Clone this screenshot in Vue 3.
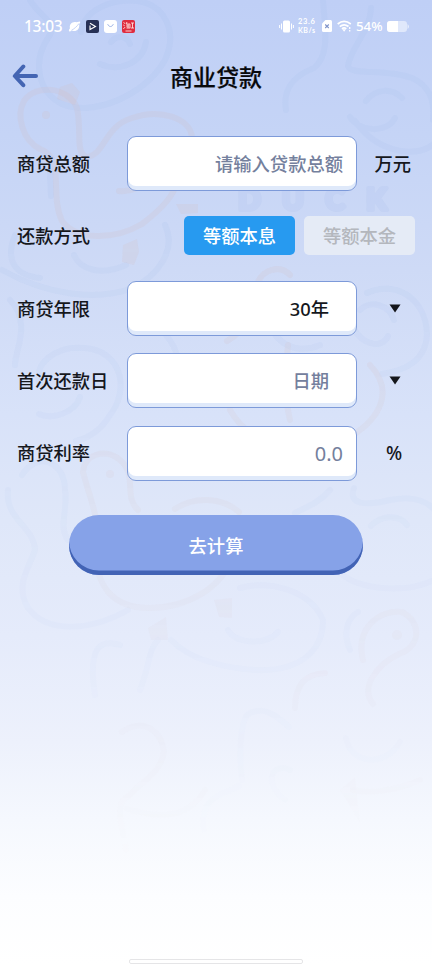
<script setup>
import { ref } from 'vue'

const amount = ref('')
const rate = ref('')
const method = ref('interest')
const methods = [
  { id: 'interest', label: '等额本息' },
  { id: 'principal', label: '等额本金' },
]
</script>

<template>
  <div class="page">
    <svg class="pattern" viewBox="0 0 432 964" fill="none" stroke-linecap="round" stroke-linejoin="round" aria-hidden="true">
      <g class="blue">
        <path d="M30 0C40 18 60 22 48 38C32 62 38 92 62 104C92 117 145 96 165 60C178 32 165 5 138 1C112-2 84 10 81 32M100 64C120 73 143 62 146 42M111 42C117 34 127 36 130 44" />
        <path d="M323 0C325 30 330 55 314 68C290 77 283 93 286 110M371 8C370 32 350 48 348 66C350 76 385 68 412 78C428 85 435 98 433 120M350 117C360 133 388 133 395 118M366 101C376 88 392 88 402 98M355 121C375 150 412 160 434 144" />
        <path d="M15 235C5 260 14 275 40 278M74 255C80 270 102 276 126 265M50 170L51 196M165 225C177 250 158 275 133 288C95 302 45 294 2 270" />
        <path d="M10 300C32 323 15 350 15 365M40 385C32 365 55 345 84 348C122 350 130 390 110 415C100 432 88 438 76 441M39 414C52 420 75 413 80 397M166 335C178 350 180 360 172 372" />
        <path d="M367 293C395 280 426 298 427 334C426 360 407 370 382 374M354 329C362 344 382 350 388 336M360 310C370 299 390 305 394 320M274 333C285 350 305 352 320 345" />
        <path d="M8 490C5 520 34 526 35 550C28 570 15 585 28 608C48 635 93 630 128 610M22 475C38 450 65 462 65 490C68 512 58 526 68 540" />
        <path d="M330 490C320 502 307 507 295 513M354 488C348 505 365 506 390 500C420 494 434 506 440 518M371 526C382 514 400 515 407 525M340 573C360 590 405 594 434 580" />
        <path d="M240 588C270 580 310 590 323 620C323 650 301 672 255 670C225 668 190 660 171 640M228 630C235 644 266 646 278 632M95 695C88 650 98 638 120 645M140 690C150 665 148 650 158 640M350 650C342 632 348 618 358 612" />
        <path d="M242 780C239 755 240 725 247 715C262 705 275 714 289 727M204 830C200 796 220 796 239 786M285 800C260 780 275 762 290 770M346 738C350 763 384 769 400 742" />
      </g>
      <g class="tan">
        <path d="M40 149C22 140 16 115 24 101C35 84 68 86 77 108C82 132 75 151 86 157C106 155 103 127 132 118C160 108 190 118 192 137M40 149C66 158 49 194 62 221C76 240 113 241 142 224C163 208 171 198 175 188M119 191C130 192 142 188 148 177" />
        <path d="M258 282C263 270 280 264 290 275M258 282C262 310 242 333 227 341M288 345C286 370 283 390 290 420M370 365C394 390 381 417 353 435M230 410C245 436 264 440 280 445" />
        <path d="M83 472C84 455 105 447 120 460C138 475 123 496 138 510M83 472C90 499 99 516 96 540C93 586 112 608 150 608C194 607 217 584 225 572M175 509C194 496 222 497 239 512" />
        <path d="M363 660C355 628 380 609 402 612C422 622 421 647 399 654C376 665 360 688 373 704M295 708C295 684 306 674 325 673" />
        <path d="M122 732C145 716 162 733 164 752C160 775 140 782 130 795C113 802 122 825 126 850M127 809C167 821 190 815 205 790M353 790C370 794 395 791 420 780" />
      </g>
      <g class="feet">
        <path d="M123 245L137 239L139 252L134 265L122 262ZM176 204L198 204L198 213L181 214ZM57 99L60 87L72 83L80 92L75 105Z" />
        <path d="M148 628L166 617L168 640L151 640ZM214 600L232 598L232 618L219 617ZM340 790L355 777L360 823Z" />
        <circle cx="46" cy="115" r="4" /><circle cx="110" cy="474" r="4" /><circle cx="397" cy="635" r="5" />
      </g>
      <text class="watermark" x="238" y="210">DUCK</text>
    </svg>

    <header class="status">
      <div class="status-left">
        <time>13:03</time>
        <svg class="planet" viewBox="0 0 14 14"><path d="M2.2 9C.8 4.5 5 1 9 2.3L12.8 1.6C13.6 2.4 13 3.6 12 4.6C13 9.5 9 13 5 11.7L1.4 12.4C.4 11.5 1.2 10.2 2.2 9Z" fill="#fff"/><path d="M3.6 11.2C6 10 10 6.8 11.8 3.8" stroke="#b9caf4" stroke-width=".9" fill="none"/></svg>
        <svg class="app" viewBox="0 0 13 13"><rect width="13" height="13" rx="2" fill="#273156"/><path d="M4 5.5V9.5L9.5 6.5L4 3.3" fill="none" stroke="#fff" stroke-width="1.1"/></svg>
        <svg class="app" viewBox="0 0 13 13"><rect width="13" height="13" rx="3" fill="#fff"/><path d="M3.7 4.2C5 7.3 8 7.3 9.3 4.2" fill="none" stroke="#9cb3e7"/></svg>
        <svg class="app" viewBox="0 0 13 13"><rect width="13" height="13" rx="2" fill="#df2c3f"/><path d="M1.5 2.5L3 3.5M1.3 5L2.7 5.8M1.3 9L3.2 7M5 2L4 4H8V8H4.5M4 6H7.5M6 4V8M9 3H12M10.5 3V8M8.8 8H12M3.5 11H9.5" fill="none" stroke="#ffe0dd" stroke-width=".9"/></svg>
      </div>
      <div class="status-right">
        <svg class="vibrate" viewBox="0 0 15 13"><rect x="4" y=".5" width="7" height="12" rx="1.5" fill="#fff"/><path d="M2.5 3.5V9.5M12.5 3.5V9.5M.6 5V8M14.4 5V8" stroke="#fff" stroke-width="1"/></svg>
        <div class="speed"><span>23.6</span><span>KB/s</span></div>
        <svg class="sim" viewBox="0 0 10 12"><path d="M3.5 0H8.5Q10 0 10 1.5V10.5Q10 12 8.5 12H1.5Q0 12 0 10.5V3.5Z" fill="#fff"/><path d="M3.2 4.5L6.8 8M6.8 4.5L3.2 8" stroke="#8095ca" stroke-width="1.1"/></svg>
        <svg class="wifi" viewBox="0 0 15 12"><path d="M.7 4Q7 -1.4 13.8 4M2.8 6.6Q7 3 11.5 6.5M5 8.8Q7 7 9.3 8.8" fill="none" stroke="#fff" stroke-width="1.7"/><path d="M5.3 9.3H8.9L7.1 11.8Z" fill="#fff"/><path d="M12.7 7V9M12.7 10V11.5" stroke="#fff" stroke-width="1.3"/></svg>
        <span class="percent">54%</span>
        <svg class="battery" viewBox="0 0 22 11"><rect width="20" height="11" rx="3" fill="#fff" opacity=".5"/><path d="M20.5 3Q22 4 22 5.5Q22 7 20.5 8Z" fill="#fff" opacity=".6"/><path d="M3 0H11V11H3Q0 11 0 8V3Q0 0 3 0Z" fill="#fff"/></svg>
      </div>
    </header>

    <nav class="titlebar">
      <button class="back" aria-label="返回">
        <svg viewBox="0 0 26 24"><path d="M11.3 2.5L2.8 12L11.3 21.2M3.3 12H24" fill="none" stroke="#4465b3" stroke-width="4" stroke-linecap="round" stroke-linejoin="round"/></svg>
      </button>
      <h1>商业贷款</h1>
    </nav>

    <main>
      <div class="row">
        <label class="label" for="amount">商贷总额</label>
        <input id="amount" v-model="amount" class="field" placeholder="请输入贷款总额">
        <span class="unit">万元</span>
      </div>
      <div class="row">
        <span class="label">还款方式</span>
        <div class="methods">
          <button v-for="m in methods" :key="m.id" :class="{ active: method === m.id }" @click="method = m.id">{{ m.label }}</button>
        </div>
      </div>
      <div class="row">
        <span class="label">商贷年限</span>
        <div class="field picker years">30年</div>
        <svg class="arrow" viewBox="0 0 12 9"><path d="M.5.5H11.5L6 8.5Z"/></svg>
      </div>
      <div class="row">
        <span class="label">首次还款日</span>
        <div class="field picker date">日期</div>
        <svg class="arrow" viewBox="0 0 12 9"><path d="M.5.5H11.5L6 8.5Z"/></svg>
      </div>
      <div class="row">
        <label class="label" for="rate">商贷利率</label>
        <input id="rate" v-model="rate" class="field numeric" placeholder="0.0">
        <span class="unit percent-unit">%</span>
      </div>
      <button class="submit">去计算</button>
    </main>
    <div class="home-bar"></div>
  </div>
</template>

<style>
body { margin: 0; }
</style>

<style scoped>
.page {
  position: relative;
  display: flex;
  flex-direction: column;
  box-sizing: border-box;
  height: 964px;
  overflow: hidden;
  background: linear-gradient(#bfcff6 0, #c5d4f6 14%, #cedaf6 28%, #d8e2f9 43%, #dfe7f9 54%, #e5ebfb 66%, #edf1fc 77%, #f5f8fe 85%, #fcfdff 93%, #fff);
  font-family: "Noto Sans CJK SC", sans-serif;
  color: #15171c;
}
button, input { font: inherit; border: 0; padding: 0; margin: 0; }
.pattern {
  position: absolute;
  inset: 0;
  width: 432px;
  height: 964px;
  pointer-events: none;
  mask-image: linear-gradient(#000 0, #000 25%, rgba(0, 0, 0, .6) 50%, rgba(0, 0, 0, .3) 70%, rgba(0, 0, 0, .1) 84%, transparent 92%);
}
.blue { stroke: #8eb0e8; stroke-width: 6; opacity: .09; }
.tan { stroke: #d6b5b1; stroke-width: 6; opacity: .15; }
.feet { fill: #d8b7b1; opacity: .16; }
.watermark { fill: #8fa9df; stroke: #8fa9df; stroke-width: 4px; opacity: .1; font: 900 30px/1 Lato, sans-serif; letter-spacing: 21px; }
.status, .titlebar, main { position: relative; }
.status {
  display: flex;
  justify-content: space-between;
  align-items: center;
  height: 52px;
  padding: 0 24px;
  box-sizing: border-box;
  color: #fff;
}
.status-left, .status-right { display: flex; align-items: center; }
.status-left { gap: 5px; }
time { font: 500 15.5px/20px "Noto Sans", sans-serif; width: 39px; letter-spacing: -.25px; white-space: nowrap; }
.planet { width: 13px; height: 13px; }
.app { width: 13px; height: 13px; }
.vibrate { width: 15px; height: 13px; }
.speed { display: flex; flex-direction: column; width: 19px; margin-left: 4px; font: 700 7.5px/9px Lato, sans-serif; letter-spacing: .7px; white-space: nowrap; }
.speed span:last-child { font-size: 7px; letter-spacing: .5px; }
.sim { width: 10px; height: 12px; margin-left: 5px; }
.wifi { width: 15px; height: 12px; margin-left: 5px; }
.percent { width: 27px; margin-left: 4px; font: 500 13.3px/16px "Noto Sans", sans-serif; white-space: nowrap; }
.battery { width: 22px; height: 11px; margin-left: 4px; }
.status-right { margin-right: -1px; }
.titlebar { display: grid; grid-template-columns: 50px 1fr 50px; align-items: center; height: 48px; }
.back { width: 26px; height: 24px; margin-left: 12px; background: none; }
.back svg { display: block; width: 26px; height: 24px; }
h1 { margin: 0 0 1px; text-align: center; font-size: 23px; line-height: 32px; font-weight: 500; color: #08090c; -webkit-text-stroke: .2px #08090c; }
main { display: flex; flex-direction: column; gap: 17.4px; padding: 36px 17px 0; font-size: 18.3px; font-weight: 500; }
.row { display: grid; grid-template-columns: 110px 230px 1fr; align-items: center; height: 55px; }
.label { padding-bottom: 1.5px; }
.field {
  box-sizing: border-box;
  width: 230px;
  height: 55px;
  padding: 0 13px 2px;
  border: 1px solid #7d9ad9;
  border-radius: 9px;
  background: #fff;
  box-shadow: inset 0 -4px 0 #dfe9fa;
  text-align: right;
  font-size: 18.3px;
  color: #15171c;
  outline: none;
}
.field::placeholder { color: #74809d; opacity: 1; }
.picker { padding-right: 27px; line-height: 53px; }
.years { font-family: "Noto Sans", "Noto Sans CJK SC", sans-serif; }
.date { color: #74809d; }
.numeric { padding-bottom: 0; font: 400 20px "Noto Sans", sans-serif; }
.unit { margin-left: 17.5px; padding-bottom: 2px; line-height: 20px; }
.percent-unit { margin-left: 29px; padding-bottom: 0; font: 500 19px "Noto Sans", sans-serif; }
.arrow { width: 12px; height: 9px; margin-left: 32px; fill: #14161b; }
.methods { grid-column: 2 / 4; display: flex; justify-content: flex-end; gap: 9px; margin-bottom: 1px; }
.methods button { width: 111px; height: 39px; border-radius: 5px; background: #e5ebf6; color: #b4b7bd; font-size: 18.3px; line-height: 39px; }
.methods button.active { background: #279af0; color: #fff; }
.submit { align-self: center; width: 294px; height: 60px; margin-top: 17px; border-radius: 30px; background: #86a2e8; box-shadow: inset 0 -4.5px 0 #4263b5; color: #fff; font-size: 18.3px; font-weight: 500; }
.home-bar { position: relative; align-self: center; box-sizing: border-box; width: 174px; height: 5px; margin-top: auto; border: 1px solid #e5e5e7; border-radius: 2px; background: #fff; }
</style>
